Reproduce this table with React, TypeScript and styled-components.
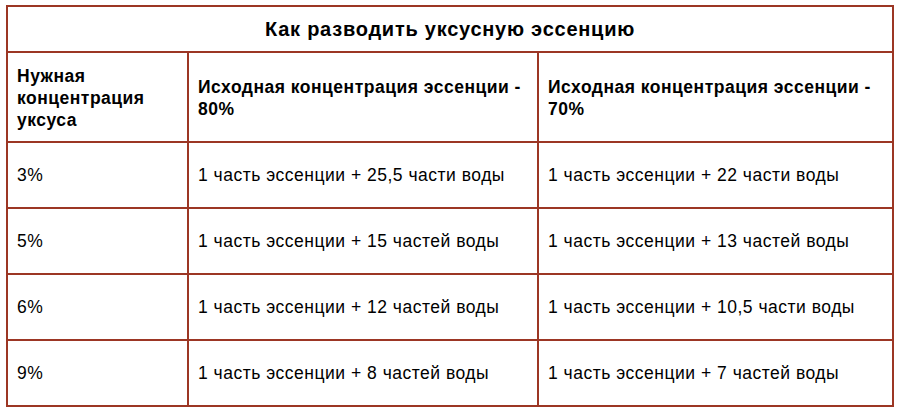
import React from "react";
import styled, { createGlobalStyle } from "styled-components";

const GlobalStyle = createGlobalStyle`
  html, body {
    margin: 0;
    padding: 0;
    background: #ffffff;
  }
  body {
    font-family: "Liberation Sans", Arial, sans-serif;
    color: #000000;
  }
`;

const Wrapper = styled.div`
  padding: 5px 6px;
`;

const Table = styled.table`
  width: 886px;
  border-collapse: collapse;
  table-layout: fixed;
  border: 2px solid #9c3624;
  font-size: 17.5px;
  letter-spacing: 0.5px;
  line-height: 22px;
`;

const TitleCell = styled.th`
  height: 44px;
  padding: 0 9px;
  border: 2px solid #9c3624;
  font-size: 20px;
  letter-spacing: 0.75px;
  font-weight: bold;
  text-align: center;
  vertical-align: middle;
`;

const HeadCell = styled.th`
  height: 86px;
  padding: 2px 9px 0;
  border: 2px solid #9c3624;
  font-weight: bold;
  text-align: left;
  vertical-align: middle;
`;

const Cell = styled.td`
  height: 64px;
  padding: 0 9px;
  border: 2px solid #9c3624;
  text-align: left;
  vertical-align: middle;
`;

const rows = [
  ["3%", "1 часть эссенции + 25,5 части воды", "1 часть эссенции + 22 части воды"],
  ["5%", "1 часть эссенции + 15 частей воды", "1 часть эссенции + 13 частей воды"],
  ["6%", "1 часть эссенции + 12 частей воды", "1 часть эссенции + 10,5 части воды"],
  ["9%", "1 часть эссенции + 8 частей воды", "1 часть эссенции + 7 частей воды"],
];

const App = () => {
  return (
    <Wrapper>
      <GlobalStyle />
      <Table>
        <colgroup>
          <col style={{ width: 181 }} />
          <col style={{ width: 350 }} />
          <col style={{ width: 355 }} />
        </colgroup>
        <thead>
          <tr>
            <TitleCell colSpan={3}>Как разводить уксусную эссенцию</TitleCell>
          </tr>
          <tr>
            <HeadCell>Нужная концентрация уксуса</HeadCell>
            <HeadCell>Исходная концентрация эссенции - 80%</HeadCell>
            <HeadCell>Исходная концентрация эссенции - 70%</HeadCell>
          </tr>
        </thead>
        <tbody>
          {rows.map((row) => (
            <tr key={row[0]}>
              {row.map((text, i) => (
                <Cell key={i}>{text}</Cell>
              ))}
            </tr>
          ))}
        </tbody>
      </Table>
    </Wrapper>
  );
};

export default App;
